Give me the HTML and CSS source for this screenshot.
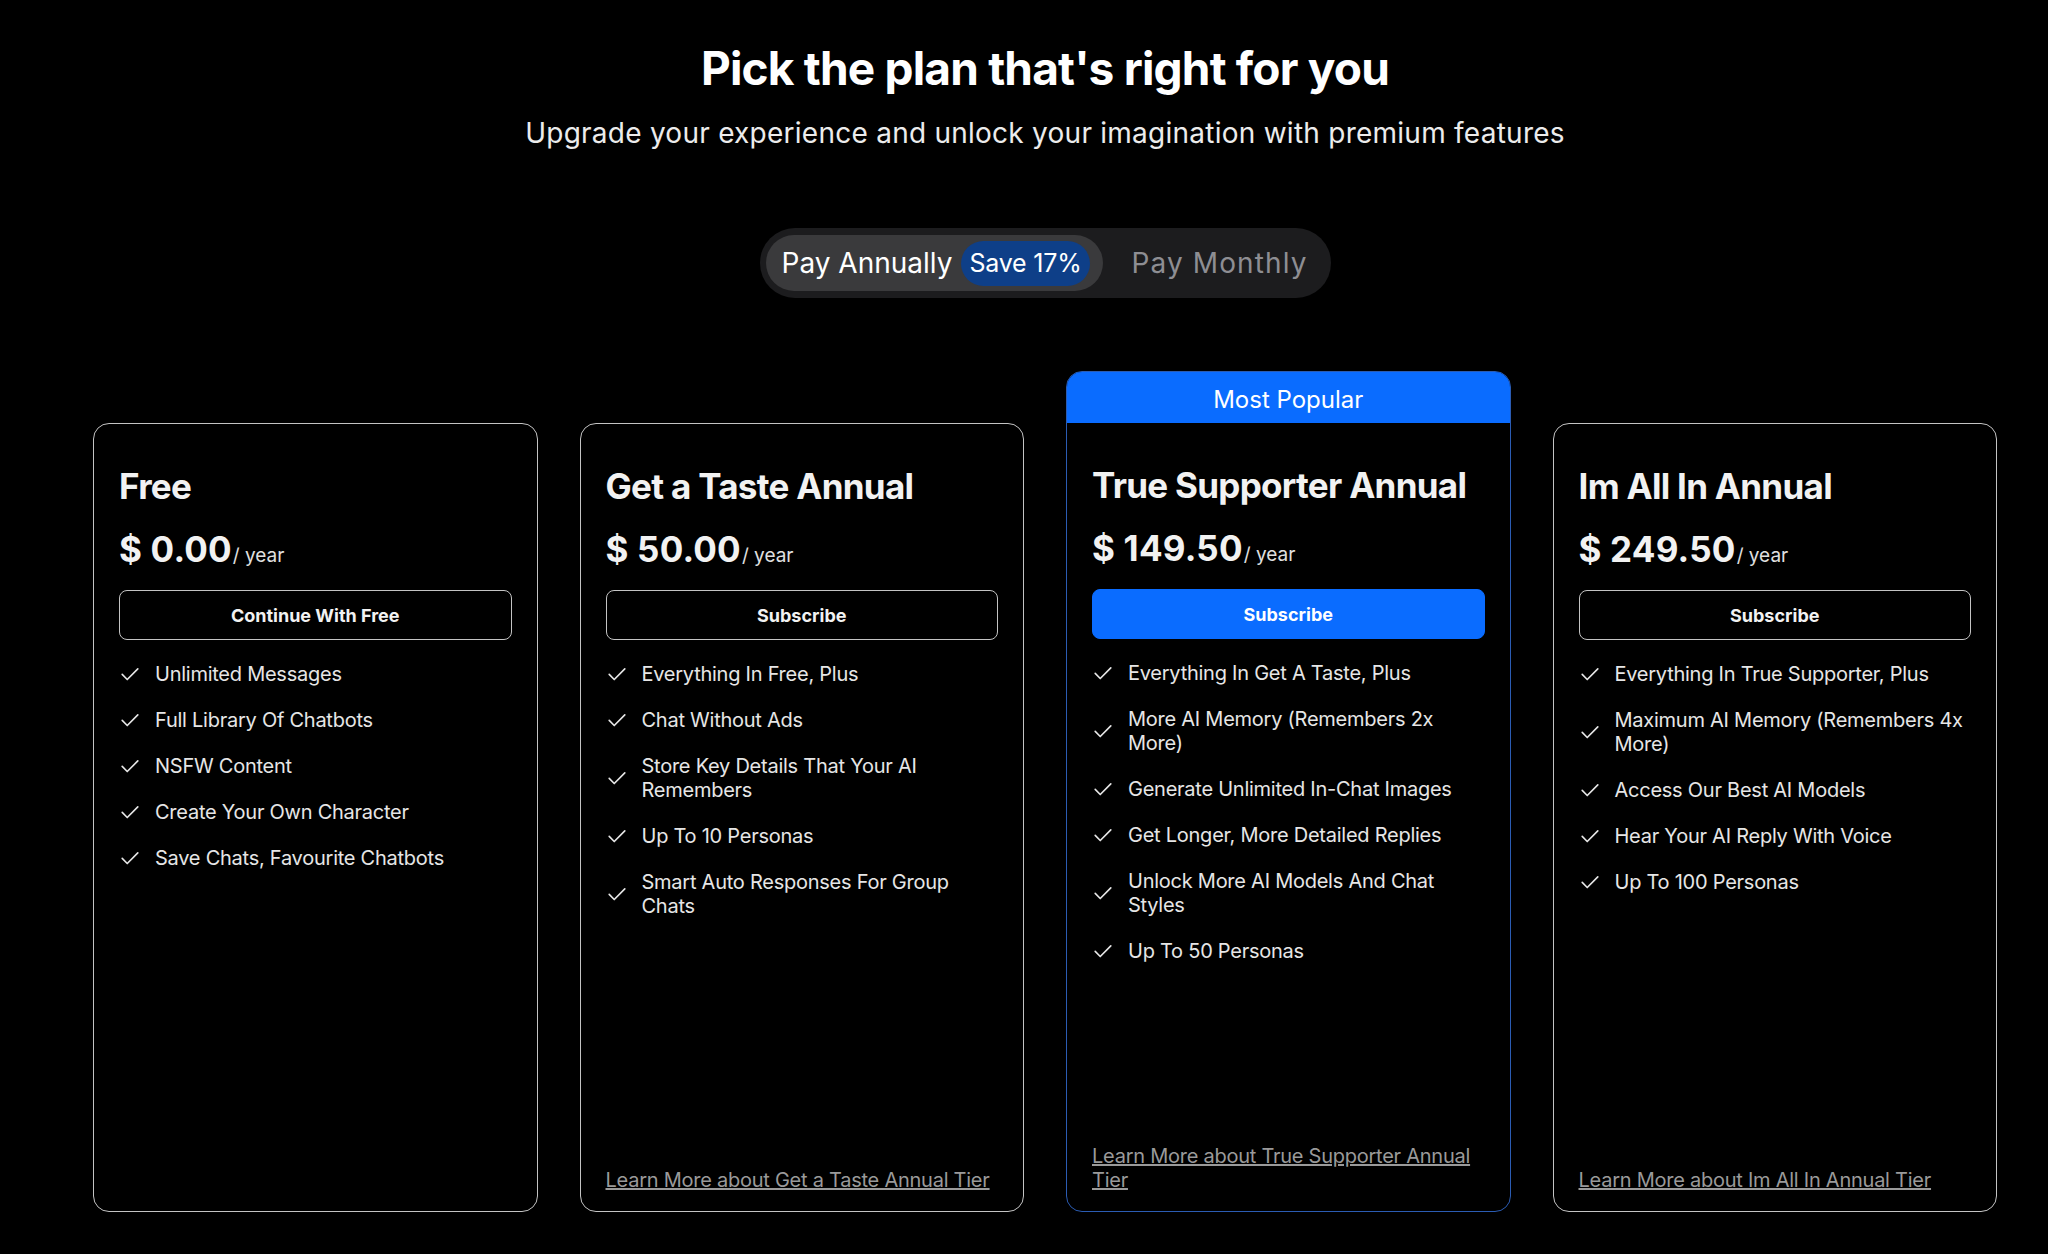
FILE: index.html
```html
<!DOCTYPE html>
<html lang="en">
<head>
    <meta charset="UTF-8">
    <meta name="viewport" content="width=device-width, initial-scale=1.0">
    <title>Pricing - Pick a plan</title>
    <link rel="stylesheet" href="styles.css">
</head>
<body>
    <div class="page">
        <header class="intro">
            <h1>Pick the plan that's right for you</h1>
            <p>Upgrade your experience and unlock your imagination with premium features</p>
        </header>

        <div class="billing">
            <div class="billing-switch">
                <button class="billing-opt active">
                    <span>Pay Annually</span>
                    <span class="save">Save 17%</span>
                </button>
                <button class="billing-opt monthly">
                    <span>Pay Monthly</span>
                </button>
            </div>
        </div>

        <div class="plans">
            <!-- free -->
            <div class="plan">
                <div class="plan-body">
                    <h2 class="plan-name">Free</h2>
                    <div class="plan-price"><span class="amount">$ 0.00</span><span class="per">/ year</span></div>
                    <button class="plan-btn">Continue With Free</button>
                    <ul class="features">
                        <li><svg viewBox="0 0 24 24"><polyline points="3.5 12.5 9 18 20.5 6.5"/></svg><span>Unlimited Messages</span></li>
                        <li><svg viewBox="0 0 24 24"><polyline points="3.5 12.5 9 18 20.5 6.5"/></svg><span>Full Library Of Chatbots</span></li>
                        <li><svg viewBox="0 0 24 24"><polyline points="3.5 12.5 9 18 20.5 6.5"/></svg><span>NSFW Content</span></li>
                        <li><svg viewBox="0 0 24 24"><polyline points="3.5 12.5 9 18 20.5 6.5"/></svg><span>Create Your Own Character</span></li>
                        <li><svg viewBox="0 0 24 24"><polyline points="3.5 12.5 9 18 20.5 6.5"/></svg><span>Save Chats, Favourite Chatbots</span></li>
                    </ul>
                </div>
            </div>

            <!-- taste -->
            <div class="plan">
                <div class="plan-body">
                    <h2 class="plan-name">Get a Taste Annual</h2>
                    <div class="plan-price"><span class="amount">$ 50.00</span><span class="per">/ year</span></div>
                    <button class="plan-btn">Subscribe</button>
                    <ul class="features">
                        <li><svg viewBox="0 0 24 24"><polyline points="3.5 12.5 9 18 20.5 6.5"/></svg><span>Everything In Free, Plus</span></li>
                        <li><svg viewBox="0 0 24 24"><polyline points="3.5 12.5 9 18 20.5 6.5"/></svg><span>Chat Without Ads</span></li>
                        <li><svg viewBox="0 0 24 24"><polyline points="3.5 12.5 9 18 20.5 6.5"/></svg><span>Store Key Details That Your AI Remembers</span></li>
                        <li><svg viewBox="0 0 24 24"><polyline points="3.5 12.5 9 18 20.5 6.5"/></svg><span>Up To 10 Personas</span></li>
                        <li><svg viewBox="0 0 24 24"><polyline points="3.5 12.5 9 18 20.5 6.5"/></svg><span>Smart Auto Responses For Group Chats</span></li>
                    </ul>
                    <a class="learn" href="#">Learn More about Get a Taste Annual Tier</a>
                </div>
            </div>

            <!-- supporter (popular) -->
            <div class="plan popular">
                <div class="plan-banner">Most Popular</div>
                <div class="plan-body">
                    <h2 class="plan-name">True Supporter Annual</h2>
                    <div class="plan-price"><span class="amount">$ 149.50</span><span class="per">/ year</span></div>
                    <button class="plan-btn primary">Subscribe</button>
                    <ul class="features">
                        <li><svg viewBox="0 0 24 24"><polyline points="3.5 12.5 9 18 20.5 6.5"/></svg><span>Everything In Get A Taste, Plus</span></li>
                        <li><svg viewBox="0 0 24 24"><polyline points="3.5 12.5 9 18 20.5 6.5"/></svg><span>More AI Memory (Remembers 2x More)</span></li>
                        <li><svg viewBox="0 0 24 24"><polyline points="3.5 12.5 9 18 20.5 6.5"/></svg><span>Generate Unlimited In-Chat Images</span></li>
                        <li><svg viewBox="0 0 24 24"><polyline points="3.5 12.5 9 18 20.5 6.5"/></svg><span>Get Longer, More Detailed Replies</span></li>
                        <li><svg viewBox="0 0 24 24"><polyline points="3.5 12.5 9 18 20.5 6.5"/></svg><span>Unlock More AI Models And Chat Styles</span></li>
                        <li><svg viewBox="0 0 24 24"><polyline points="3.5 12.5 9 18 20.5 6.5"/></svg><span>Up To 50 Personas</span></li>
                    </ul>
                    <a class="learn" href="#">Learn More about True Supporter Annual Tier</a>
                </div>
            </div>

            <!-- all in -->
            <div class="plan">
                <div class="plan-body">
                    <h2 class="plan-name">Im All In Annual</h2>
                    <div class="plan-price"><span class="amount">$ 249.50</span><span class="per">/ year</span></div>
                    <button class="plan-btn">Subscribe</button>
                    <ul class="features">
                        <li><svg viewBox="0 0 24 24"><polyline points="3.5 12.5 9 18 20.5 6.5"/></svg><span>Everything In True Supporter, Plus</span></li>
                        <li><svg viewBox="0 0 24 24"><polyline points="3.5 12.5 9 18 20.5 6.5"/></svg><span>Maximum AI Memory (Remembers 4x More)</span></li>
                        <li><svg viewBox="0 0 24 24"><polyline points="3.5 12.5 9 18 20.5 6.5"/></svg><span>Access Our Best AI Models</span></li>
                        <li><svg viewBox="0 0 24 24"><polyline points="3.5 12.5 9 18 20.5 6.5"/></svg><span>Hear Your AI Reply With Voice</span></li>
                        <li><svg viewBox="0 0 24 24"><polyline points="3.5 12.5 9 18 20.5 6.5"/></svg><span>Up To 100 Personas</span></li>
                    </ul>
                    <a class="learn" href="#">Learn More about Im All In Annual Tier</a>
                </div>
            </div>
        </div>
    </div>
</body>
</html>
```

FILE: styles.css
```css
* {
    box-sizing: border-box;
    font-family: "Inter", "Liberation Sans", sans-serif;
}

body {
    margin: 0;
    background-color: #000;
    color: #fff;
}

.page {
    padding: 40px 0 40px 42px;
}

.intro {
    text-align: center;
}

.intro h1 {
    margin: 0;
    font-size: 46px;
    line-height: 56px;
    font-weight: 700;
    letter-spacing: -0.8px;
}

.intro p {
    margin: 20px 0 0;
    font-size: 28px;
    line-height: 34px;
    color: #ececec;
    letter-spacing: 0.25px;
}

.billing {
    display: flex;
    justify-content: center;
    margin-top: 78px;
}

.billing-switch {
    display: flex;
    align-items: center;
    gap: 29px;
    background-color: #1c1c1e;
    border-radius: 35px;
    padding: 7px 23px 7px 6px;
}

.billing-opt {
    display: flex;
    align-items: center;
    gap: 9px;
    border: none;
    background: transparent;
    color: #8e8e93;
    font-size: 28px;
    padding: 0;
    height: 56px;
    cursor: pointer;
}

.billing-opt.monthly {
    letter-spacing: 1.1px;
}

.billing-opt.active {
    background-color: #3a3a3c;
    color: #fff;
    border-radius: 28px;
    padding: 0 13px 0 16px;
}

.save {
    background-color: #0e3f88;
    color: #fff;
    font-size: 25px;
    letter-spacing: -0.2px;
    height: 45px;
    line-height: 45px;
    padding: 0 8px;
    border-radius: 23px;
}

.plans {
    display: grid;
    grid-template-columns: repeat(4, 1fr);
    gap: 42px;
    width: 1904px;
    margin: 73px auto 0;
}

.plan {
    display: flex;
    flex-direction: column;
    margin-top: 52px; /* room for the banner on the popular card */
    min-height: 789px;
    border: 1.5px solid #c4c4c4;
    border-radius: 16px;
    overflow: hidden;
}

.plan.popular {
    margin-top: 0;
    border: 1px solid #2b5cb3;
}

.plan-banner {
    background-color: #0a6cff;
    height: 52px;
    padding-top: 5px;
    line-height: 47px;
    text-align: center;
    font-size: 24px;
    color: #fff;
    margin: -1px -1px 0;
}

.plan-body {
    flex: 1;
    display: flex;
    flex-direction: column;
    padding: 41px 25px 19px;
}

.plan-name {
    margin: 0;
    font-size: 35px;
    line-height: 42px;
    font-weight: 700;
    letter-spacing: -0.7px;
    color: #f2f2f2;
}

.plan-price {
    margin-top: 22px;
    line-height: 40px;
    color: #f2f2f2;
}

.plan-price .amount {
    font-size: 35px;
    font-weight: 700;
    letter-spacing: 0.2px;
}

.plan-price .per {
    font-size: 19px;
    color: #e0e0e0;
    margin-left: 1px;
}

.plan-btn {
    margin-top: 14px;
    height: 50px;
    width: 100%;
    border: 1px solid #c4c4c4;
    border-radius: 8px;
    background: transparent;
    color: #f2f2f2;
    font-size: 18px;
    font-weight: 700;
    cursor: pointer;
}

.plan-btn.primary {
    background-color: #0a6cff;
    border-color: #0a6cff;
    color: #fff;
}

.features {
    list-style: none;
    margin: 22px 0 0;
    padding: 0;
    display: flex;
    flex-direction: column;
    gap: 22px;
}

.features li {
    display: flex;
    align-items: center;
    gap: 14px;
    font-size: 20px;
    line-height: 24px;
    letter-spacing: -0.25px;
    color: #e6e6e6;
}

.features svg {
    width: 22px;
    height: 22px;
    flex-shrink: 0;
    fill: none;
    stroke: #e6e6e6;
    stroke-width: 1.8;
    stroke-linecap: round;
    stroke-linejoin: round;
}

.learn {
    margin-top: auto;
    font-size: 20px;
    line-height: 24px;
    letter-spacing: -0.25px;
    color: #9a9a9a;
    text-decoration: underline;
}
```
